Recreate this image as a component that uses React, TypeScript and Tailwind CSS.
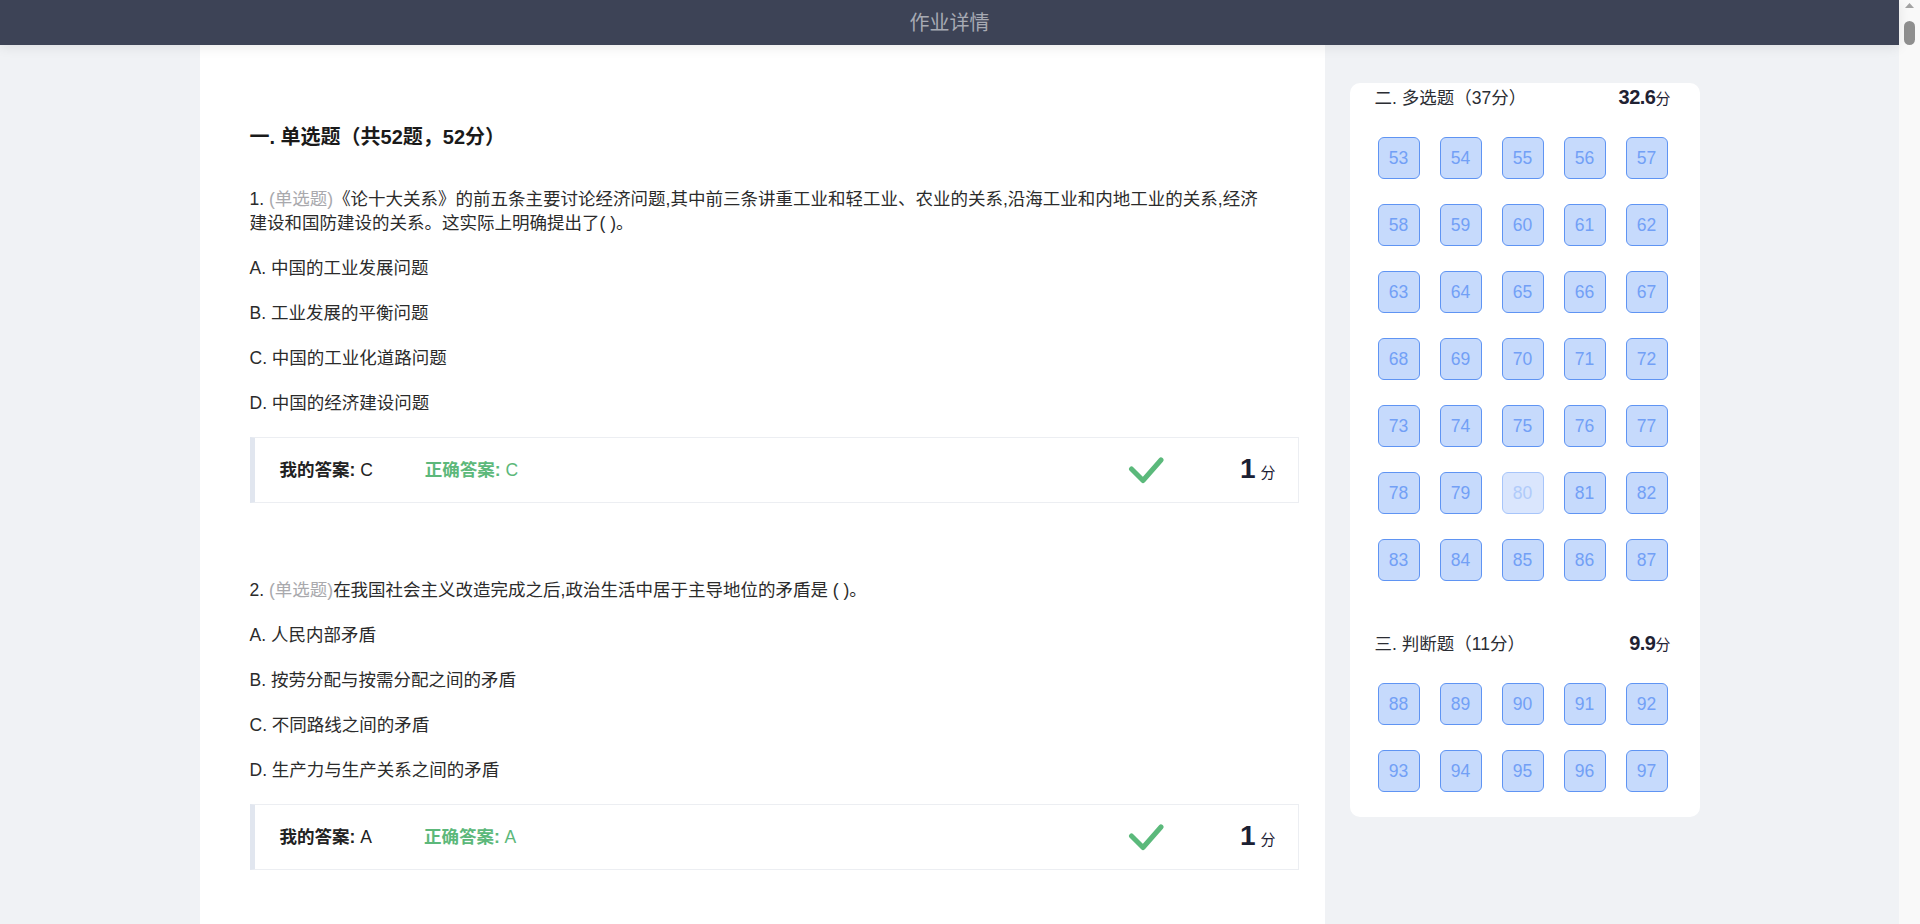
import React from "react";

type Question = {
  no: number;
  text: string;
  options: string[];
  mine: string;
  correct: string;
  score: number;
};

const questions: Question[] = [
  {
    no: 1,
    text: "《论十大关系》的前五条主要讨论经济问题,其中前三条讲重工业和轻工业、农业的关系,沿海工业和内地工业的关系,经济建设和国防建设的关系。这实际上明确提出了( )。",
    options: ["A. 中国的工业发展问题", "B. 工业发展的平衡问题", "C. 中国的工业化道路问题", "D. 中国的经济建设问题"],
    mine: "C",
    correct: "C",
    score: 1,
  },
  {
    no: 2,
    text: "在我国社会主义改造完成之后,政治生活中居于主导地位的矛盾是 ( )。",
    options: ["A. 人民内部矛盾", "B. 按劳分配与按需分配之间的矛盾", "C. 不同路线之间的矛盾", "D. 生产力与生产关系之间的矛盾"],
    mine: "A",
    correct: "A",
    score: 1,
  },
];

const range = (from: number, to: number) => Array.from({ length: to - from + 1 }, (_, i) => from + i);

function CheckMark() {
  return (
    <svg width="36" height="30" viewBox="0 0 36 30" fill="none">
      <path d="M3.5 14 L15 25.5 L33 5" stroke="#5bb97b" strokeWidth="5" strokeLinecap="round" strokeLinejoin="round" />
    </svg>
  );
}

function QuestionBlock({ q, first }: { q: Question; first: boolean }) {
  return (
    <div className={first ? "mt-[38px]" : "mt-[75px]"}>
      <p className="pr-6 text-[17.5px] leading-[24px] text-[#2b2b2b]">
        {q.no}. <span className="text-[#a9a9ad]">(单选题)</span>
        {q.text}
      </p>
      {q.options.map((opt) => (
        <p key={opt} className="mt-[21px] text-[17.5px] leading-[24px] text-[#2b2b2b]">
          {opt}
        </p>
      ))}
      <div className="mt-[22px] flex h-[66px] items-center border border-l-[5px] border-[#eceef2] border-l-[#e1e6ef] pl-[25px] pr-[22px] text-[17.5px]">
        <span className="text-[#222]">
          <b className="font-bold">我的答案:</b> {q.mine}
        </span>
        <span className="ml-[52px] text-[#5cb87a]">
          <b className="font-bold">正确答案:</b> {q.correct}
        </span>
        <div className="ml-auto mr-[76px] flex items-center">
          <CheckMark />
        </div>
        <span className="flex items-baseline text-[#1b2033]">
          <span className="text-[28px] font-semibold leading-none">{q.score}</span>
          <span className="ml-[5px] text-[15px]">分</span>
        </span>
      </div>
    </div>
  );
}

function NumButton({ n }: { n: number }) {
  const faded = n === 80;
  return (
    <div
      className={
        faded
          ? "flex h-[42px] w-[42px] items-center justify-center rounded-[6px] border border-[#a7c5fa] bg-[#dae6fd] text-[17.5px] text-[#b0cbfa]"
          : "flex h-[42px] w-[42px] items-center justify-center rounded-[6px] border border-[#5f94f3] bg-[#c6dafc] text-[17.5px] text-[#72a0f6]"
      }
    >
      {n}
    </div>
  );
}

function Section({ title, score, nums, top }: { title: string; score: string; nums: number[]; top: string }) {
  return (
    <div className={top}>
      <div className="flex items-baseline justify-between pr-[2px] leading-[24px]">
        <span className="text-[17.5px] text-[#2b2d33]">{title}</span>
        <span className="text-[#1f2233]">
          <span className="text-[20px] font-semibold tracking-tight">{score}</span>
          <span className="text-[15px]">分</span>
        </span>
      </div>
      <div className="ml-[3px] mt-[26px] grid grid-cols-[repeat(5,42px)] gap-x-[20px] gap-y-[25px]">
        {nums.map((n) => (
          <NumButton key={n} n={n} />
        ))}
      </div>
    </div>
  );
}

export default function App() {
  return (
    <div className="flex h-screen overflow-hidden bg-[#f0f2f5] font-['Liberation_Sans','Noto_Sans_CJK_SC',sans-serif]">
      <div className="flex min-w-0 flex-1 flex-col">
        {/* Header */}
        <header className="relative z-10 flex h-[45px] shrink-0 items-center justify-center bg-[#3d4356] shadow-[0_2px_12px_rgba(0,0,0,0.09)]">
          <span className="text-[20px] text-[#a7aab3]">作业详情</span>
        </header>

        <div className="flex min-h-0 flex-1 justify-center">
          <div className="flex w-[1500px] items-start gap-[25px]">
            {/* Questions */}
            <main className="h-full w-[1125px] shrink-0 bg-white pl-[50px] pr-[26px] pt-[80px]">
              <h2 className="text-[20px] font-bold leading-[24px] text-[#1a1a1a]">一. 单选题（共52题，52分）</h2>
              {questions.map((q, i) => (
                <QuestionBlock key={q.no} q={q} first={i === 0} />
              ))}
            </main>

            {/* Answer sheet */}
            <aside className="mt-[38px] w-[350px] shrink-0 rounded-[10px] bg-white pb-[25px] pl-[25px] pr-[27px] pt-[2px]">
              <Section title="二. 多选题（37分）" score="32.6" nums={range(53, 87)} top="" />
              <Section title="三. 判断题（11分）" score="9.9" nums={range(88, 97)} top="mt-[50px]" />
            </aside>
          </div>
        </div>
      </div>

      {/* Scrollbar */}
      <div className="flex w-[21px] shrink-0 flex-col items-center bg-[#f9f9f9]">
        <svg width="9" height="6" viewBox="0 0 9 6" className="mt-[3px]">
          <polygon points="4.5,0 9,5 0,5" fill="#a3a3a3" />
        </svg>
        <div className="mt-[12px] h-[24px] w-[11px] rounded-full bg-[#8f8f8f]" />
      </div>
    </div>
  );
}
